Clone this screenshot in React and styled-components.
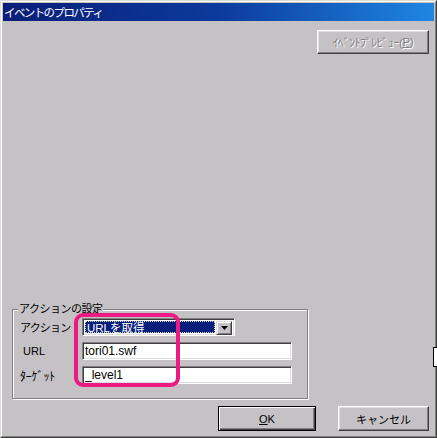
import React from 'react';
import styled, { createGlobalStyle, css } from 'styled-components';

const FONT = `"Liberation Sans", "Noto Sans CJK JP", sans-serif`;
const FACE = '#c4c2c5';

const Global = createGlobalStyle`
  html, body { margin: 0; padding: 0; background: ${FACE}; }
  body { font-family: ${FONT}; }
  *, *::before, *::after { box-sizing: border-box; }
`;

const Window = styled.div`
  position: relative;
  width: 437px;
  height: 438px;
  border: 1px solid;
  border-color: #dcdcdc #404040 #404040 #dcdcdc;
  background: ${FACE};
`;

const Frame = styled.div`
  height: 100%;
  border: 1px solid;
  border-color: #fff #808080 #808080 #fff;
  padding: 1px;
  display: flex;
  flex-direction: column;
`;

const TitleBar = styled.div`
  height: 18px;
  flex: none;
  display: flex;
  align-items: center;
  padding-left: 1px;
  background: linear-gradient(90deg, #0a1e78 0%, #0c3a9c 50%, #1f86e2 100%);
  color: #fff;
  font-size: 11.5px;
  letter-spacing: -1.6px;
  white-space: nowrap;
`;

const Body = styled.div`
  flex: 1;
  display: flex;
  flex-direction: column;
  padding: 9px 5px 4px 9px;
`;

const TopRow = styled.div`
  display: flex;
  justify-content: flex-end;
`;

const BottomRow = styled.div`
  display: flex;
  justify-content: flex-end;
  gap: 22px;
  margin-top: 7px;
`;

const Button = styled.button`
  width: ${p => p.$w}px;
  height: ${p => p.$h || 25}px;
  padding: 0;
  background: ${FACE};
  border: 1px solid;
  border-color: #fff #404040 #404040 #fff;
  box-shadow: inset -1px -1px 0 #808080, inset 1px 1px 0 #dfdfdf;
  font-family: ${FONT};
  font-size: ${p => p.$size || 11}px;
  letter-spacing: ${p => p.$ls || 0}px;
  color: #000;
  display: flex;
  align-items: center;
  justify-content: center;
  white-space: nowrap;
  ${p => p.$default && css`
    border-color: #000;
    box-shadow: inset 1px 1px 0 #fff, inset -1px -1px 0 #404040, inset -2px -2px 0 #808080;
  `}
  ${p => p.disabled && css`
    color: #808080;
    text-shadow: 1px 1px 0 #fff;
  `}
  u { text-decoration: underline; text-underline-offset: 1px; }
`;

const Group = styled.fieldset`
  margin: auto 0 0 0;
  width: 296px;
  min-width: 0;
  padding: 2px 8px 14px 7px;
  border: 1px solid #808080;
  box-shadow: inset 1px 1px 0 #fff, 1px 1px 0 #fff;
`;

const Legend = styled.legend`
  padding: 0 1px;
  margin-left: -2px;
  font-size: 11px;
  line-height: 14px;
  letter-spacing: -0.5px;
  background: ${FACE};
  color: #000;
`;

const FormGrid = styled.div`
  display: grid;
  grid-template-columns: 62px auto;
  row-gap: 6px;
  align-items: center;
`;

const Label = styled.span`
  font-size: ${p => p.$size || 11}px;
  letter-spacing: ${p => p.$ls || 0}px;
  color: #000;
  white-space: nowrap;
  padding-left: ${p => p.$indent || 0}px;
`;

const sunken = css`
  border: 1px solid;
  border-color: #808080 #fff #fff #808080;
  box-shadow: inset 1px 1px 0 #404040, inset -1px -1px 0 #dfdfdf;
  background: #fff;
`;

const Combo = styled.div`
  ${sunken};
  width: 153px;
  height: 18px;
  padding: 2px;
  display: flex;
`;

const Selected = styled.div`
  flex: 1;
  margin-right: 1px;
  background: #0a1e7c;
  outline: 1px dotted #d8d8b0;
  outline-offset: -1px;
  color: #fff;
  font-size: 11.5px;
  line-height: 14px;
  padding-left: 2px;
  white-space: nowrap;
`;

const DropButton = styled.div`
  width: 16px;
  height: 14px;
  background: ${FACE};
  border: 1px solid;
  border-color: #dfdfdf #404040 #404040 #dfdfdf;
  box-shadow: inset 1px 1px 0 #fff, inset -1px -1px 0 #808080;
  display: flex;
  align-items: center;
  justify-content: center;
`;

const Field = styled.input`
  ${sunken};
  width: 210px;
  height: 18px;
  padding: 0 2px;
  margin: 0;
  font-family: ${FONT};
  font-size: 12px;
  color: #000;
  outline: none;
`;

const Annotation = styled.div`
  position: absolute;
  left: 73px;
  top: 312px;
  width: 106px;
  height: 74px;
  border: 4px solid #ee1a84;
  border-radius: 9px;
  pointer-events: none;
`;

const Cursor = styled.svg`
  position: absolute;
  left: 431px;
  top: 346px;
  width: 6px;
  height: 20px;
`;

export default function App() {
  return (
    <>
      <Global />
      <Window>
        <Frame>
          <TitleBar>イベントのプロパティ</TitleBar>
          <Body>
            <TopRow>
              <Button $w={112} $h={24} $size={11.5} $ls={-0.3} disabled>
                ｲﾍﾞﾝﾄﾌﾟﾚﾋﾞｭｰ(<u>P</u>)
              </Button>
            </TopRow>
            <Group>
              <Legend>アクションの設定</Legend>
              <FormGrid>
                <Label $ls={-0.8}>アクション</Label>
                <Combo>
                  <Selected>URLを取得</Selected>
                  <DropButton>
                    <svg width="7" height="4" viewBox="0 0 7 4">
                      <path d="M0 0h7L3.5 4z" fill="#000" />
                    </svg>
                  </DropButton>
                </Combo>
                <Label $indent={3}>URL</Label>
                <Field readOnly defaultValue="tori01.swf" />
                <Label $size={12} $ls={-0.2}>ﾀｰｹﾞｯﾄ</Label>
                <Field readOnly defaultValue="_level1" />
              </FormGrid>
            </Group>
            <BottomRow>
              <Button $w={98} $default>
                <u>O</u>K
              </Button>
              <Button $w={91}>キャンセル</Button>
            </BottomRow>
          </Body>
        </Frame>
        <Annotation />
        <Cursor viewBox="0 0 6 20">
          <rect x="2" y="1" width="4" height="18" fill="#fff" />
          <rect x="1" y="0" width="1" height="20" fill="#000" />
          <rect x="1" y="0" width="5" height="1" fill="#000" />
          <rect x="1" y="19" width="5" height="1" fill="#000" />
        </Cursor>
      </Window>
    </>
  );
}
